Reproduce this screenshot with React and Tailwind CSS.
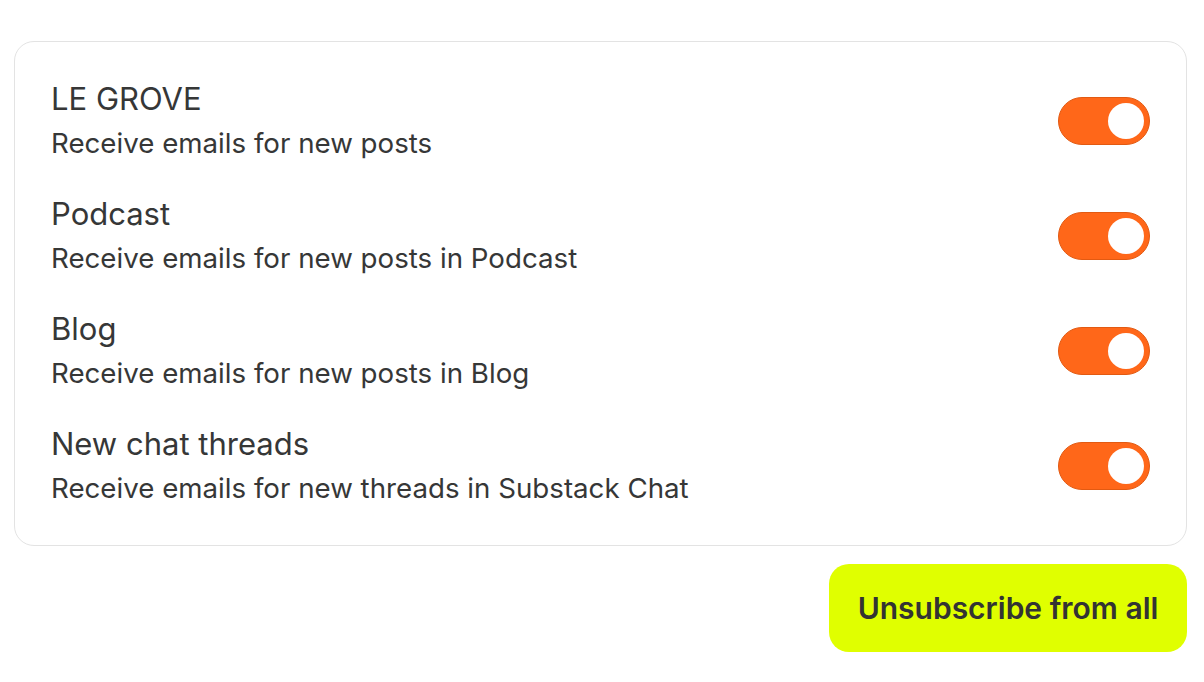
const rows = [
  { title: "LE GROVE", desc: "Receive emails for new posts" },
  { title: "Podcast", desc: "Receive emails for new posts in Podcast" },
  { title: "Blog", desc: "Receive emails for new posts in Blog" },
  { title: "New chat threads", desc: "Receive emails for new threads in Substack Chat" },
];

function Toggle() {
  return (
    <div className="w-[92px] h-[48px] rounded-full bg-[#ff6719] border border-[#e25a12] flex items-center justify-end px-[5px] shrink-0">
      <div className="w-[36px] h-[36px] rounded-full bg-white" />
    </div>
  );
}

export default function App() {
  return (
    <div
      className="min-h-screen bg-white pt-[41px] pl-[14px] pr-[17px] text-[#363737]"
      style={{ fontFamily: "Inter, 'Noto Sans', sans-serif" }}
    >
      <div className="border border-[#e3e3e3] rounded-[20px] pl-[36px] pr-[36px] py-[35px] flex flex-col gap-[27px]">
        {rows.map((r) => (
          <div key={r.title} className="flex items-center justify-between">
            <div className="flex flex-col">
              <div className="text-[31px] leading-[44px]">{r.title}</div>
              <div className="text-[27.7px] leading-[44px]">{r.desc}</div>
            </div>
            <Toggle />
          </div>
        ))}
      </div>
      <div className="flex justify-end mt-[18px]">
        <button className="h-[88px] w-[358px] rounded-[20px] bg-[#e0ff00] text-[30px] font-semibold text-[#333333]">
          Unsubscribe from all
        </button>
      </div>
    </div>
  );
}
